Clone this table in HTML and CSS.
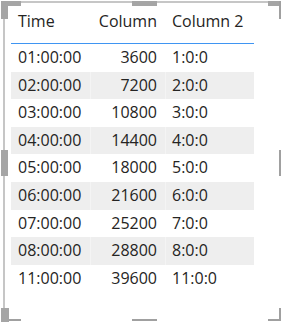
FILE: index.html
```html
<!DOCTYPE html>
<html>
<head>
<meta charset="utf-8">
<link rel="stylesheet" href="styles.css">
</head>
<body>
<div class="visual">
  <div class="table">
    <div class="row head"><span class="c1">Time</span><span class="c2">Column</span><span class="c3">Column 2</span></div>
    <div class="rule"></div>
    <div class="row"><span class="c1">01:00:00</span><span class="c2">3600</span><span class="c3">1:0:0</span></div>
    <div class="row alt"><span class="c1">02:00:00</span><span class="c2">7200</span><span class="c3">2:0:0</span></div>
    <div class="row"><span class="c1">03:00:00</span><span class="c2">10800</span><span class="c3">3:0:0</span></div>
    <div class="row alt"><span class="c1">04:00:00</span><span class="c2">14400</span><span class="c3">4:0:0</span></div>
    <div class="row"><span class="c1">05:00:00</span><span class="c2">18000</span><span class="c3">5:0:0</span></div>
    <div class="row alt"><span class="c1">06:00:00</span><span class="c2">21600</span><span class="c3">6:0:0</span></div>
    <div class="row"><span class="c1">07:00:00</span><span class="c2">25200</span><span class="c3">7:0:0</span></div>
    <div class="row alt"><span class="c1">08:00:00</span><span class="c2">28800</span><span class="c3">8:0:0</span></div>
    <div class="row"><span class="c1">11:00:00</span><span class="c2">39600</span><span class="c3">11:0:0</span></div>
  </div>
  <div class="ln ln-top"></div>
  <div class="ln ln-left"></div>
  <div class="hd hd-tl-h"></div>
  <div class="hd hd-tl-v"></div>
  <div class="hd hd-tm"></div>
  <div class="hd hd-tr-h"></div>
  <div class="th th-tr-v"></div>
  <div class="hd hd-ml"></div>
  <div class="th th-mr"></div>
  <div class="hd hd-bl-v"></div>
  <div class="th th-bl-h"></div>
  <div class="th th-bm"></div>
  <div class="th th-br-h"></div>
  <div class="th th-br-v"></div>
</div>
</body>
</html>
```
FILE: styles.css
```css
html, body {
  margin: 0;
  padding: 0;
  background: #ffffff;
}
.visual {
  position: relative;
  width: 282px;
  height: 322px;
  overflow: hidden;
  font-family: "Open Sans", "Noto Sans", sans-serif;
  font-size: 16px;
  color: #252423;
}
.table {
  margin-left: 11px;
  width: 243px;
}
.row {
  display: grid;
  grid-template-columns: 79px 75px 89px;
  height: 27.6px;
  line-height: 27.6px;
  white-space: nowrap;
}
.row.head {
  line-height: 22px;
  padding-top: 10px;
  box-sizing: border-box;
  height: 43px;
}
.rule {
  height: 1px;
  background: #3f95f2;
}
.row.alt {
  background: #eeeeee;
}
.row.alt .c2, .row.alt .c3 {
  box-shadow: inset 1px 0 0 #f4f4f4;
}
.c1 {
  padding-left: 7px;
}
.c2 {
  text-align: right;
  padding-right: 8px;
}
.c3 {
  padding-left: 7px;
}
.ln, .hd, .th {
  position: absolute;
}
.ln {
  background: #c6c6c6;
}
.hd {
  background: #a5a5a5;
}
.th {
  background: #a0a0a0;
}
.ln-top { left: 3px; top: 1px; width: 277px; height: 2px; }
.ln-left { left: 3px; top: 1px; width: 2px; height: 321px; }
.hd-tl-h { left: 3px; top: 1px; width: 18px; height: 5px; }
.hd-tl-v { left: 1px; top: 1px; width: 7px; height: 18px; }
.hd-tm { left: 132px; top: 1px; width: 25px; height: 5px; }
.hd-tr-h { left: 268px; top: 1px; width: 12px; height: 5px; }
.th-tr-v { left: 279px; top: 1px; width: 2px; height: 18px; }
.hd-ml { left: 1px; top: 150px; width: 7px; height: 26px; }
.th-mr { left: 279px; top: 150px; width: 2px; height: 26px; }
.hd-bl-v { left: 1px; top: 308px; width: 8px; height: 14px; }
.th-bl-h { left: 9px; top: 319px; width: 12px; height: 2px; }
.th-bm { left: 132px; top: 319px; width: 25px; height: 2px; }
.th-br-h { left: 268px; top: 319px; width: 13px; height: 2px; }
.th-br-v { left: 279px; top: 308px; width: 2px; height: 13px; }
```
